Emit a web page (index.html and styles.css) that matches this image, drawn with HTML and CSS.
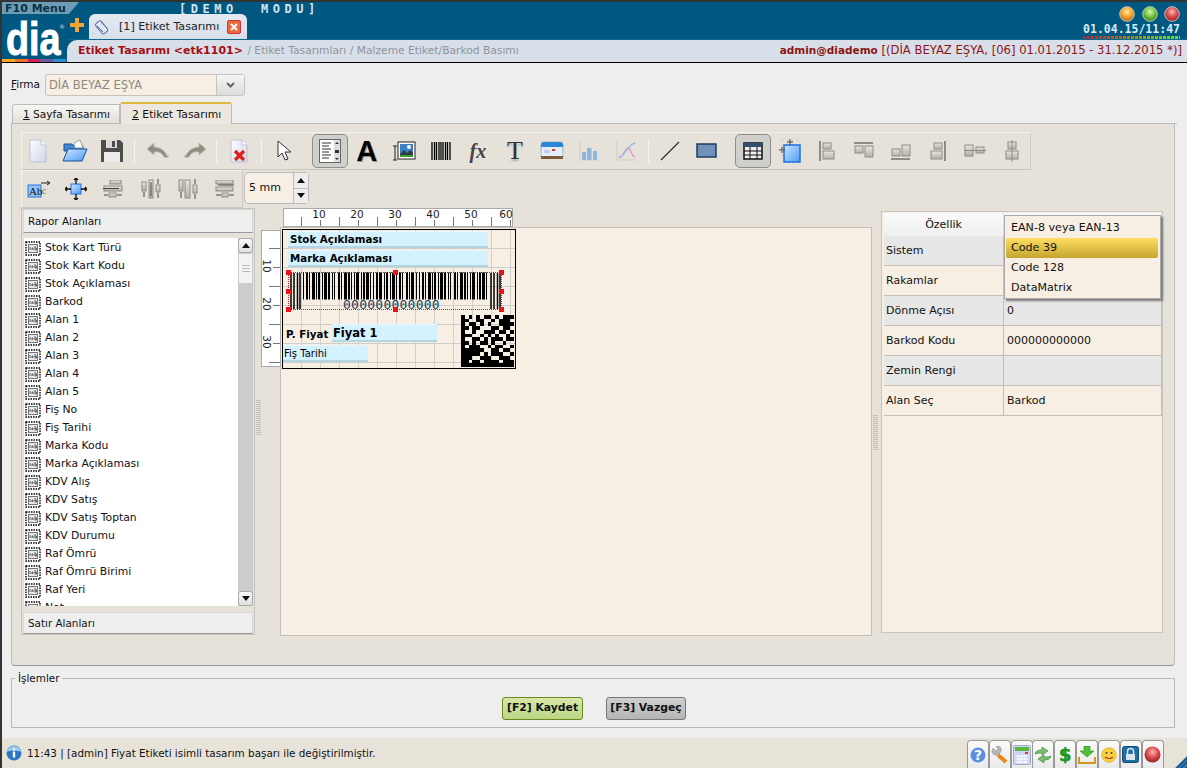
FILE: index.html
```html
<!DOCTYPE html>
<html lang="tr">
<head>
<meta charset="utf-8">
<title>Etiket Tasarımı</title>
<link rel="stylesheet" href="styles.css">
</head>
<body>
<svg class="defs" width="0" height="0">
  <defs>
    <symbol id="fld" viewBox="0 0 16 15">
      <rect x="1" y="1" width="14" height="13" fill="none" stroke="#000" stroke-width="1.400" stroke-dasharray="1.500 1"/>
      <rect x="3.500" y="3.500" width="9" height="8" fill="#e8e8e8" stroke="#777"/>
      <path d="M5 9V6M7 9V7h1v2M10 5v4h1.500V7H10" fill="none" stroke="#444" stroke-width=".8"/>
    </symbol>
    <linearGradient id="pg" x1="0" y1="0" x2="1" y2="1"><stop offset="0" stop-color="#fff"/><stop offset="1" stop-color="#cdd5ea"/></linearGradient>
    <linearGradient id="bl" x1="0" y1="0" x2="1" y2="1"><stop offset="0" stop-color="#cfe6ff"/><stop offset="1" stop-color="#4e9bf5"/></linearGradient>
    <linearGradient id="gy" x1="0" y1="0" x2="0" y2="1"><stop offset="0" stop-color="#e8e6df"/><stop offset="1" stop-color="#b3b0a6"/></linearGradient>
    <radialGradient id="ora" cx=".5" cy=".35" r=".7"><stop offset="0" stop-color="#ffe9a0"/><stop offset=".5" stop-color="#f2a52d"/><stop offset="1" stop-color="#a85c10"/></radialGradient>
    <radialGradient id="grn" cx=".5" cy=".35" r=".7"><stop offset="0" stop-color="#dcf8b8"/><stop offset=".5" stop-color="#72c340"/><stop offset="1" stop-color="#2e7a1c"/></radialGradient>
    <radialGradient id="red" cx=".5" cy=".35" r=".7"><stop offset="0" stop-color="#f8b8b8"/><stop offset=".5" stop-color="#dc4a4a"/><stop offset="1" stop-color="#8a1c1c"/></radialGradient>
  </defs>
</svg>
<div class="app">
  <header class="head">
    <div class="brand">
      <div class="f10">F10 Menu</div>
      <div class="logo"><span class="logo-txt">dia</span><span class="logo-r">®</span></div>
      <div class="strip"><i class="s1"></i><i class="s2"></i><i class="s3"></i><i class="s4"></i><i class="s5"></i></div>
    </div>
    <div class="head-main">
      <div class="head-top">
        <div class="demo">[DEMO  MODU]</div>
        <div class="tabline">
          <svg class="plus" width="14" height="14" viewBox="0 0 14 14"><path d="M5 0h4v5h5v4H9v5H5V9H0V5h5z" fill="#f2a531"/></svg>
          <div class="apptab">
            <svg width="16" height="16" viewBox="0 0 16 16"><g fill="#dfe6f4" stroke="#5a69a8"><rect x="4" y="1.500" width="7" height="13" rx="2" transform="rotate(-40 8 8)"/></g><path d="M3 7l6 6M7 3l6 6" stroke="#5a69a8" fill="none"/></svg>
            <span class="apptab-t">[1] Etiket Tasarımı</span>
            <span class="close"><svg width="8" height="8" viewBox="0 0 8 8"><path d="M1 1l6 6M7 1L1 7" stroke="#fff" stroke-width="2"/></svg></span>
          </div>
        </div>
        <div class="sysbox">
          <div class="lights">
            <svg width="16" height="16" viewBox="0 0 16 16"><circle cx="8" cy="8" r="7.300" fill="url(#ora)" stroke="#ddd" stroke-width=".8"/></svg>
            <svg width="16" height="16" viewBox="0 0 16 16"><circle cx="8" cy="8" r="7.300" fill="url(#grn)" stroke="#ddd" stroke-width=".8"/></svg>
            <svg width="16" height="16" viewBox="0 0 16 16"><circle cx="8" cy="8" r="7.300" fill="url(#red)" stroke="#ddd" stroke-width=".8"/></svg>
          </div>
          <div class="clock">01.04.15/11:47</div>
          <div class="meter"></div>
        </div>
      </div>
      <div class="crumb">
        <span class="crumb-l"><b class="crumb-b">Etiket Tasarımı &lt;etk1101&gt;</b> <span class="crumb-g">/ Etiket Tasarımları / Malzeme Etiket/Barkod Basımı</span></span>
        <span class="crumb-r"><b class="crumb-u">admin@diademo</b> [(DİA BEYAZ EŞYA, [06] 01.01.2015 - 31.12.2015 *)]</span>
      </div>
    </div>
  </header>

  <main class="main">
    <div class="firma">
      <span class="firma-l"><u>F</u>irma</span>
      <div class="combo">
        <span class="combo-v">DİA BEYAZ EŞYA</span>
        <span class="combo-b"><svg width="9" height="6" viewBox="0 0 9 6"><path d="M1 1l3.500 3.500L8 1" fill="none" stroke="#666" stroke-width="2"/></svg></span>
      </div>
    </div>
    <div class="tabs">
      <div class="tab"><u>1</u> Sayfa Tasarımı</div>
      <div class="tab tab-on"><u>2</u> Etiket Tasarımı</div>
    </div>
    <section class="panel">
      <div class="tb tb1">
        <span class="ib ib-first"><svg width="22" height="24" viewBox="0 0 22 24"><path d="M3 1h11l5 5v17H3z" fill="url(#pg)" stroke="#bcc2d2"/><path d="M14 1v5h5" fill="#fff" stroke="#bcc2d2"/></svg></span>
        <span class="ib"><svg width="26" height="24" viewBox="0 0 26 24"><path d="M2 5h8l2 2h9v5H2z" fill="#3f86d6" stroke="#1b4f9c"/><path d="M12 4l6-3 3 8h-8z" fill="#fff" stroke="#8aa"/><path d="M1 22l5-12h19l-5 12z" fill="url(#bl)" stroke="#1b4f9c"/></svg></span>
        <span class="ib"><svg width="24" height="24" viewBox="0 0 24 24"><path d="M1 1h19l3 3v19H1z" fill="#4d4d4d"/><rect x="6" y="1" width="11" height="8" fill="#d8d8d8"/><rect x="12" y="2" width="3" height="6" fill="#4d4d4d"/><rect x="4" y="13" width="16" height="10" fill="#ececec"/></svg></span>
        <i class="sep sep8"></i>
        <span class="ib"><svg width="24" height="18" viewBox="0 0 24 18"><path d="M8 1L1 7l7 6v-3c5-1 8 1 10 5 3 1 5 0 5-1-3 2-2-8-15-9z" fill="#8f8d82" stroke="#bdbbb0"/></svg></span>
        <span class="ib"><svg width="24" height="18" viewBox="0 0 24 18"><path d="M16 1l7 6-7 6v-3c-5-1-8 1-10 5-3 1-5 0-5-1 3 2 2-8 15-9z" fill="#8f8d82" stroke="#bdbbb0"/></svg></span>
        <i class="sep sep7"></i>
        <span class="ib"><svg width="22" height="24" viewBox="0 0 22 24"><path d="M3 1h11l5 5v17H3z" fill="url(#pg)" stroke="#bcc2d2"/><path d="M14 1v5h5" fill="#fff" stroke="#bcc2d2"/><path d="M7 12l9 9M16 12l-9 9" stroke="#e0201a" stroke-width="3.200"/></svg></span>
        <i class="sep sep8"></i>
        <span class="ib"><svg width="16" height="22" viewBox="0 0 16 22"><path d="M2 1v16l4-4 3 7 3-1-3-7h6z" fill="#fff" stroke="#333"/></svg></span>
        <span class="ib ib-on ib-m9"><svg width="22" height="24" viewBox="0 0 22 24"><rect x=".5" y=".5" width="21" height="23" fill="#fff" stroke="#666"/><path d="M3 4h9M3 7h7M3 10h9M3 13h7M3 16h9M3 19h7" stroke="#333"/><rect x="15" y="1" width="6" height="22" fill="#ddd"/><path d="M16 5l2-2 2 2zM16 19l2 2 2-2zM16 11h4v3h-4z" fill="#333"/></svg></span>
        <span class="ib ib-n"><span class="gA">A</span></span>
        <span class="ib ib-n"><svg width="24" height="22" viewBox="0 0 24 22"><path d="M3 6v14M1 6h4M1 20h4" stroke="#222"/><rect x="6" y="2" width="17" height="17" fill="#fff" stroke="#222"/><rect x="8" y="4" width="13" height="13" fill="#3b7fc4"/><path d="M8 14l4-4 3 3 3-3 3 3v4H8z" fill="#2c3e40"/><path d="M8 15h13v2H8z" fill="#3a9a30"/><circle cx="17" cy="7" r="2" fill="#fff"/></svg></span>
        <span class="ib ib-n"><svg width="20" height="18" viewBox="0 0 20 18"><path d="M1 0v18M3.500 0v18M5.500 0v18M8 0v18M10 0v18M12 0v18M14.500 0v18M16.500 0v18M19 0v18" stroke="#000" stroke-width="1.300"/></svg></span>
        <span class="ib ib-n"><span class="gfx">fx</span></span>
        <span class="ib ib-n"><span class="gT">T</span></span>
        <span class="ib ib-n"><svg width="24" height="22" viewBox="0 0 24 22"><path d="M1 5q0-3 3-3h16q3 0 3 3v12H1z" fill="#e3eefa" stroke="#9bb"/><path d="M1 5q0-3 3-3h16q3 0 3 3v2H1z" fill="#2b86d4"/><rect x="1" y="16" width="22" height="3" fill="#7c5a3c"/><rect x="12" y="9" width="3" height="2" fill="#d33"/><rect x="4" y="10" width="6" height="3" fill="#bcd0ea"/></svg></span>
        <span class="ib ib-n"><svg width="22" height="22" viewBox="0 0 22 22"><path d="M2 1v19h19" fill="none" stroke="#cfcdc6"/><rect x="4" y="12" width="4" height="8" fill="#8eb6de"/><rect x="9" y="8" width="4.500" height="12" fill="#8eb6de"/><rect x="15" y="11" width="4" height="9" fill="#8eb6de"/></svg></span>
        <span class="ib ib-n"><svg width="22" height="22" viewBox="0 0 22 22"><path d="M2 1v19h19" fill="none" stroke="#cfcdc6"/><path d="M4 18c5-2 6-10 9-10 3 0 3 8 7 9" fill="none" stroke="#d9a0c6" stroke-width="1.400"/><path d="M4 17c7 0 7-12 16-14" fill="none" stroke="#94bde6" stroke-width="1.400"/></svg></span>
        <i class="sep sep7"></i>
        <span class="ib ib-n"><svg width="20" height="20" viewBox="0 0 20 20"><path d="M1 19L19 1" stroke="#333" stroke-width="1.200"/></svg></span>
        <span class="ib ib-n"><svg width="22" height="16" viewBox="0 0 22 16"><rect x="1" y="1" width="19" height="13" fill="#7092b8" stroke="#1e3c60" stroke-width="1.500"/></svg></span>
        <span class="ib ib-on ib-m9"><svg width="20" height="18" viewBox="0 0 20 18"><rect x="1" y="1" width="18" height="16" fill="#eee" stroke="#111" stroke-width="1.500"/><rect x="1" y="1" width="18" height="4" fill="#33506e"/><path d="M1 9h18M1 13h18M7 5v12M14 5v12" stroke="#111"/></svg></span>
        <span class="ib ib-n"><svg width="22" height="24" viewBox="0 0 22 24"><rect x="5" y="6" width="16" height="17" fill="url(#bl)" stroke="#1f6fe0" stroke-width="1.500"/><path d="M11 0v6M8 3h6M0 11h6M3 8v6" stroke="#444"/><path d="M3 1h16M3 1v20" stroke="#bbb" stroke-dasharray="1 4"/></svg></span>
        <span class="ib ib-n"><svg width="16" height="20" viewBox="0 0 16 20"><rect x="0" y="0" width="2" height="20" fill="#8f8c84"/><rect x="4" y="2" width="8" height="6" fill="url(#gy)" stroke="#8f8c84"/><rect x="4" y="10" width="11" height="8" fill="url(#gy)" stroke="#8f8c84"/></svg></span>
        <span class="ib ib-n"><svg width="20" height="18" viewBox="0 0 20 18"><rect x="0" y="0" width="19" height="2" fill="#8f8c84"/><rect x="1" y="4" width="8" height="7" fill="url(#gy)" stroke="#8f8c84"/><rect x="11" y="4" width="8" height="11" fill="url(#gy)" stroke="#8f8c84"/></svg></span>
        <span class="ib ib-n"><svg width="20" height="18" viewBox="0 0 20 18"><rect x="0" y="16" width="19" height="2" fill="#8f8c84"/><rect x="1" y="7" width="8" height="7" fill="url(#gy)" stroke="#8f8c84"/><rect x="11" y="3" width="8" height="11" fill="url(#gy)" stroke="#8f8c84"/></svg></span>
        <span class="ib ib-n"><svg width="16" height="20" viewBox="0 0 16 20"><rect x="14" y="0" width="2" height="20" fill="#8f8c84"/><rect x="4" y="2" width="8" height="6" fill="url(#gy)" stroke="#8f8c84"/><rect x="1" y="10" width="11" height="8" fill="url(#gy)" stroke="#8f8c84"/></svg></span>
        <span class="ib ib-n"><svg width="22" height="14" viewBox="0 0 22 14"><rect x="1" y="1" width="8" height="11" fill="url(#gy)" stroke="#8f8c84"/><rect x="12" y="3" width="8" height="6" fill="url(#gy)" stroke="#8f8c84"/><path d="M0 6.500h22" stroke="#8f8c84"/></svg></span>
        <span class="ib ib-n"><svg width="14" height="22" viewBox="0 0 14 22"><rect x="3" y="2" width="8" height="7" fill="url(#gy)" stroke="#8f8c84"/><rect x="1" y="11" width="12" height="8" fill="url(#gy)" stroke="#8f8c84"/><path d="M7 0v22" stroke="#8f8c84"/></svg></span>
      </div>
      <div class="tb2wrap">
        <div class="tb tb2">
          <span class="ib ib-first2"><svg width="24" height="20" viewBox="0 0 24 20"><rect x="1" y="6" width="13" height="12" fill="#8fc2f6" stroke="#2a75d8"/><text x="2" y="16" class="ic-t">Ab</text><text x="15" y="15" class="ic-g">c</text><path d="M14 4h8M20 2l3 2-3 2" fill="none" stroke="#222"/></svg></span>
          <span class="ib"><svg width="22" height="22" viewBox="0 0 22 22"><rect x="6" y="6" width="10" height="10" fill="url(#bl)" stroke="#1f6fe0"/><path d="M11 0v6M9 2l2-2 2 2M11 22v-6M9 20l2 2 2-2M0 11h6M2 9l-2 2 2 2M22 11h-6M20 9l2 2-2 2" fill="none" stroke="#111" stroke-width="1.300"/></svg></span>
          <span class="ib"><svg width="20" height="18" viewBox="0 0 20 18"><rect x="7" y="0" width="11" height="4" fill="url(#gy)" stroke="#8f8c84"/><rect x="1" y="6" width="18" height="5" fill="url(#gy)" stroke="#8f8c84"/><rect x="6" y="13" width="7" height="4" fill="url(#gy)" stroke="#8f8c84"/><path d="M0 8.500h16M1 15h4M14 15h5" stroke="#444"/></svg></span>
          <span class="ib"><svg width="20" height="20" viewBox="0 0 20 20"><rect x="1" y="3" width="4" height="9" fill="url(#gy)" stroke="#8f8c84"/><rect x="8" y="1" width="4" height="18" fill="url(#gy)" stroke="#8f8c84"/><rect x="15" y="6" width="4" height="7" fill="url(#gy)" stroke="#8f8c84"/><path d="M3 13v5M10 3v14M17 0v5M17 14v5" stroke="#444"/></svg></span>
          <span class="ib"><svg width="20" height="20" viewBox="0 0 20 20"><rect x="1" y="1" width="4" height="11" fill="url(#gy)" stroke="#8f8c84"/><rect x="7" y="1" width="5" height="18" fill="url(#gy)" stroke="#8f8c84"/><rect x="15" y="6" width="4" height="8" fill="url(#gy)" stroke="#8f8c84"/><path d="M3 13v6M17 0v5M17 15v5" stroke="#444"/></svg></span>
          <span class="ib"><svg width="20" height="18" viewBox="0 0 20 18"><rect x="1" y="0" width="17" height="4" fill="url(#gy)" stroke="#8f8c84"/><rect x="1" y="7" width="17" height="4" fill="url(#gy)" stroke="#8f8c84"/><rect x="7" y="13" width="6" height="4" fill="url(#gy)" stroke="#8f8c84"/><path d="M3 5h16M1 15h5M14 15h5" stroke="#444"/></svg></span>
        </div>
        <div class="spin">
          <span class="spin-v">5 mm</span>
          <span class="spin-b">
            <span class="spin-u"><svg width="8" height="5" viewBox="0 0 8 5"><path d="M0 5l4-5 4 5z" fill="#111"/></svg></span>
            <span class="spin-d"><svg width="8" height="5" viewBox="0 0 8 5"><path d="M0 0l4 5 4-5z" fill="#111"/></svg></span>
          </span>
        </div>
      </div>
      <div class="work">
        <aside class="left">
          <div class="lhead">Rapor Alanları</div>
          <div class="listbox">
            <ul class="list">
              <li><svg class="fi"><use href="#fld"/></svg>Stok Kart Türü</li>
              <li><svg class="fi"><use href="#fld"/></svg>Stok Kart Kodu</li>
              <li><svg class="fi"><use href="#fld"/></svg>Stok Açıklaması</li>
              <li><svg class="fi"><use href="#fld"/></svg>Barkod</li>
              <li><svg class="fi"><use href="#fld"/></svg>Alan 1</li>
              <li><svg class="fi"><use href="#fld"/></svg>Alan 2</li>
              <li><svg class="fi"><use href="#fld"/></svg>Alan 3</li>
              <li><svg class="fi"><use href="#fld"/></svg>Alan 4</li>
              <li><svg class="fi"><use href="#fld"/></svg>Alan 5</li>
              <li><svg class="fi"><use href="#fld"/></svg>Fiş No</li>
              <li><svg class="fi"><use href="#fld"/></svg>Fiş Tarihi</li>
              <li><svg class="fi"><use href="#fld"/></svg>Marka Kodu</li>
              <li><svg class="fi"><use href="#fld"/></svg>Marka Açıklaması</li>
              <li><svg class="fi"><use href="#fld"/></svg>KDV Alış</li>
              <li><svg class="fi"><use href="#fld"/></svg>KDV Satış</li>
              <li><svg class="fi"><use href="#fld"/></svg>KDV Satış Toptan</li>
              <li><svg class="fi"><use href="#fld"/></svg>KDV Durumu</li>
              <li><svg class="fi"><use href="#fld"/></svg>Raf Ömrü</li>
              <li><svg class="fi"><use href="#fld"/></svg>Raf Ömrü Birimi</li>
              <li><svg class="fi"><use href="#fld"/></svg>Raf Yeri</li>
              <li><svg class="fi"><use href="#fld"/></svg>Not</li>
            </ul>
            <div class="sb">
              <span class="sb-btn"><svg width="8" height="5" viewBox="0 0 8 5"><path d="M0 5l4-5 4 5z" fill="#111"/></svg></span>
              <span class="sb-thumb"><i></i></span>
              <span class="sb-track"></span>
              <span class="sb-btn"><svg width="8" height="5" viewBox="0 0 8 5"><path d="M0 0l4 5 4-5z" fill="#111"/></svg></span>
            </div>
          </div>
          <div class="lhead lfoot">Satır Alanları</div>
        </aside>
        <div class="grip"></div>
        <div class="center">
          <div class="sheet"></div>
          <svg class="ruler-top" width="230" height="19" viewBox="0 0 230 19">
            <rect x=".5" y=".5" width="229" height="18" fill="#fff" stroke="#aaa"/>
            <path d="M18.500 9v9M37.500 12v6M56.500 9v9M75.500 12v6M94.500 9v9M113.500 12v6M132.500 9v9M151.500 12v6M170.500 9v9M189.500 12v6M208.500 9v9M227.500 12v6" stroke="#777"/>
            <g class="rt"><text x="36" y="10">10</text><text x="74" y="10">20</text><text x="112" y="10">30</text><text x="150" y="10">40</text><text x="188" y="10">50</text><text x="223" y="10">60</text></g>
          </svg>
          <svg class="ruler-left" width="20" height="137" viewBox="0 0 20 137">
            <rect x=".5" y=".5" width="19" height="136" fill="#fff" stroke="#aaa"/>
            <path d="M8 18.500h11M12 37.500h7M8 56.500h11M12 75.500h7M8 94.500h11M12 113.500h7M8 132.500h11" stroke="#777"/>
            <g class="rt"><text transform="translate(2 36) rotate(90)">10</text><text transform="translate(2 74) rotate(90)">20</text><text transform="translate(2 112) rotate(90)">30</text></g>
          </svg>
          <div class="label">
            <div class="fieldb f-stok">Stok Açıklaması</div>
            <div class="fieldb f-marka">Marka Açıklaması</div>
            <div class="bc">
              <svg class="bars" width="214" height="38" viewBox="0 0 214 38">
                <line x1="15" y1="14" x2="200" y2="14" stroke="#000" stroke-width="27" stroke-dasharray="1 2 2 1 1 2 3 1 1 1 2 2 1 1 3 1 2 2 1 1 1 3 2 1 1 2 3 1 2 1 1 2 1 1 3 2 1 1 2 1 3 1 1 2 1 2 2 1 3 2 1 1 2 2 1 1 3 1 1 2 2 1 1 3 2 1 1 1 3 2 1 2"/>
                <path d="M3 1v36M6 1v36M9.500 1v36M12 1v36M203 1v36M206 1v36M209.500 1v36M212 1v36" stroke="#000" stroke-width="1.500"/>
              </svg>
              <span class="bc-t">000000000000</span>
              <i class="h h1"></i><i class="h h2"></i><i class="h h3"></i><i class="h h4"></i><i class="h h5"></i><i class="h h6"></i><i class="h h7"></i><i class="h h8"></i>
            </div>
            <div class="pf">P. Fiyat</div>
            <div class="fieldb f-fiyat">Fiyat 1</div>
            <div class="fieldb f-fis">Fiş Tarihi</div>
            <svg class="dm" width="53" height="52" viewBox="0 0 14 14" preserveAspectRatio="none">
              <path stroke="#000" stroke-width="1" fill="none" shape-rendering="crispEdges" d="M0 .5h1M2 .5h1M4 .5h1M6 .5h2M9 .5h1M11 .5h3M0 1.500h2M4 1.500h2M8 1.500h1M10 1.500h3M0 2.500h1M2 2.500h2M5 2.500h1M7 2.500h1M10 2.500h4M0 3.500h2M3 3.500h2M8 3.500h2M11 3.500h2M0 4.500h1M3 4.500h1M6 4.500h3M10 4.500h2M13 4.500h1M0 5.500h3M5 5.500h1M7 5.500h1M9 5.500h1M12 5.500h1M0 6.500h1M3 6.500h2M6 6.500h1M8 6.500h3M12 6.500h2M0 7.500h2M3 7.500h1M5 7.500h2M8 7.500h1M11 7.500h1M0 8.500h1M2 8.500h3M7 8.500h1M9 8.500h2M13 8.500h1M0 9.500h6M8 9.500h2M11 9.500h2M0 10.500h5M6 10.500h1M8 10.500h3M13 10.500h1M0 11.500h3M5 11.500h3M10 11.500h3M0 12.500h2M3 12.500h2M6 12.500h4M11 12.500h3M0 13.500h14"/>
            </svg>
          </div>
        </div>
        <div class="grip grip-r"></div>
        <aside class="props">
          <div class="pgrid">
            <div class="ph">Özellik</div><div class="ph"></div>
            <div class="pc pg">Sistem</div><div class="pc pg"></div>
            <div class="pc">Rakamlar</div><div class="pc"></div>
            <div class="pc pg">Dönme Açısı</div><div class="pc pg">0</div>
            <div class="pc">Barkod Kodu</div><div class="pc">000000000000</div>
            <div class="pc pg">Zemin Rengi</div><div class="pc pg"></div>
            <div class="pc">Alan Seç</div><div class="pc">Barkod</div>
          </div>
          <div class="menu">
            <div class="mi">EAN-8 veya EAN-13</div>
            <div class="mi mi-on">Code 39</div>
            <div class="mi">Code 128</div>
            <div class="mi">DataMatrix</div>
          </div>
        </aside>
      </div>
    </section>
    <fieldset class="ops">
      <legend>İşlemler</legend>
      <div class="ops-row">
        <button class="btn btn-g" type="button">[F2] Kaydet</button>
        <button class="btn btn-y" type="button">[F3] Vazgeç</button>
      </div>
    </fieldset>
  </main>

  <footer class="status">
    <svg class="info" width="16" height="16" viewBox="0 0 16 16"><circle cx="8" cy="8" r="7.500" fill="#2a76c4"/><path d="M1 7a7 6 0 0 1 14 0c-4-2-10-2-14 0z" fill="#9cc8f0"/><rect x="6.800" y="6.500" width="2.400" height="6" fill="#fff"/><rect x="6.800" y="3.500" width="2.400" height="2" fill="#fff"/></svg>
    <span class="status-t">11:43 | [admin] Fiyat Etiketi isimli tasarım başarı ile değiştirilmiştir.</span>
    <div class="tray">
      <span class="tr"><svg width="16" height="16" viewBox="0 0 16 16"><circle cx="8" cy="8" r="7.500" fill="#5d8fe0"/><text x="8" y="12.500" class="q">?</text></svg></span>
      <span class="tr"><svg width="18" height="18" viewBox="0 0 18 18"><path d="M7 9l8 7" stroke="#e88a1a" stroke-width="4"/><path d="M2 2l3 3 2-2-2-3c4-1 7 3 4 7S1 9 1 5z" fill="#b5b5b5" stroke="#888" stroke-width=".5"/></svg></span>
      <span class="tr"><svg width="18" height="20" viewBox="0 0 18 20"><rect x=".5" y=".5" width="17" height="19" rx="1" fill="#cfd6f4" stroke="#a4a8c0"/><rect x="2" y="2" width="14" height="4" fill="#5cb53c"/><rect x="12" y="7" width="3" height="2" fill="#d33"/><path d="M3 11h12M3 14h12M3 17h12M6 10v8M9 10v8M12 10v8" stroke="#fff"/></svg></span>
      <span class="tr"><svg width="18" height="16" viewBox="0 0 18 16"><path d="M1 7c1-3 3-4 7-4V0l6 4-6 4V6C5 6 3 6 1 7zM17 9c-1 3-3 4-7 4v3l-6-4 6-4v2c3 0 5 0 7-1z" fill="#7cbf6c" stroke="#3c8a3c" stroke-width=".7"/></svg></span>
      <span class="tr"><span class="dollar">$</span></span>
      <span class="tr"><svg width="18" height="18" viewBox="0 0 18 18"><path d="M6 0h6v5h4l-7 6-7-6h4z" fill="#4cc030" stroke="#2a8a1a" stroke-width=".6"/><path d="M1 11v6h16v-6" fill="none" stroke="#d09a20" stroke-width="2"/></svg></span>
      <span class="tr"><svg width="16" height="16" viewBox="0 0 16 16"><circle cx="8" cy="8" r="7.300" fill="#fbd23c" stroke="#d0a020" stroke-width=".6"/><circle cx="5.500" cy="6" r="1" fill="#444"/><circle cx="10.500" cy="6" r="1" fill="#444"/><path d="M4 10q4 3 8 0" fill="none" stroke="#a33" stroke-width="1.100"/></svg></span>
      <span class="tr"><svg width="17" height="17" viewBox="0 0 17 17"><rect x=".5" y=".5" width="16" height="16" rx="2" fill="#1c6ea4" stroke="#124a70"/><rect x="4" y="8" width="9" height="6" fill="#d8e4ee"/><path d="M5.500 8V5.500a3 3 0 0 1 6 0V8" fill="none" stroke="#d8e4ee" stroke-width="1.500"/></svg></span>
      <span class="tr"><svg width="17" height="17" viewBox="0 0 17 17"><circle cx="8.500" cy="8.500" r="8" fill="url(#red)"/></svg></span>
    </div>
    <i class="corner"></i>
  </footer>
</div>
</body>
</html>
```

FILE: styles.css
```css
* { box-sizing: border-box; }
html, body { margin: 0; padding: 0; }
body { width: 1187px; height: 768px; overflow: hidden; background: #eee; font: 10.800px/1 "DejaVu Sans", sans-serif; color: #111; }
.defs { position: absolute; }
.app { width: 1187px; height: 768px; display: flex; flex-direction: column; border-top: 2px solid #333; border-left: 2px solid #333; }
svg { display: block; flex: none; }

.head { height: 61px; display: flex; background: #005880; flex: none; border-bottom: 1px solid #000; }
.brand { width: 65px; flex: none; display: flex; flex-direction: column; }
.f10 { width: 77px; height: 12px; background: #6c9db4; color: #0c3148; font: bold 11px/13px "DejaVu Sans", sans-serif; padding-left: 3px; clip-path: polygon(0 0, 100% 0, 87% 100%, 0 100%); flex: none; position: relative; z-index: 2; }
.logo { height: 45px; position: relative; overflow: hidden; }
.logo-txt { display: block; color: #fff; font: bold 46px/45px "Liberation Sans", sans-serif; -webkit-text-stroke: 1px #fff; transform: scaleX(.82); transform-origin: 0 50%; margin: 3px 0 0 4px; }
.logo-r { position: absolute; left: 57px; top: 10px; color: #cfdde6; font: 6px/1 "DejaVu Sans", sans-serif; }
.strip { height: 3px; display: flex; flex: none; width: 64px; }
.strip i { flex: 1; }
.s1 { background: #f5a623; } .s2 { background: #ef6f2e; } .s3 { background: #d81e5b; } .s4 { background: #6a5aa0; } .s5 { background: #2a8fd0; }

.head-main { flex: 1; display: flex; flex-direction: column; min-width: 0; }
.head-top { height: 38px; position: relative; flex: none; border-bottom: 1px solid #0a6a8e; display: flex; align-items: flex-end; }
.demo { position: absolute; left: 112px; top: 0; font: bold 12px/14px "DejaVu Sans Mono", monospace; letter-spacing: 4.500px; white-space: pre; color: #d2e4ee; }
.tabline { display: flex; align-items: flex-start; margin-left: 3px; height: 25px; }
.plus { margin: 4px 5px 0 0; }
.apptab { width: 158px; height: 25px; background: linear-gradient(#e4e9f1, #d8dfe9); border-radius: 6px 6px 0 0; display: flex; align-items: center; padding-left: 5px; }
.apptab-t { margin-left: 9px; width: 108px; white-space: nowrap; font-size: 11.100px; color: #222; }
.close { width: 14px; height: 14px; background: #ea6a3a; border: 1px solid #c34; border-radius: 2px; display: flex; align-items: center; justify-content: center; }
.sysbox { position: absolute; right: 7px; top: 4px; width: 97px; display: flex; flex-direction: column; align-items: flex-end; }
.lights { display: flex; gap: 6.500px; padding-right: 0; }
.clock { font: bold 11.500px/13px "DejaVu Sans Mono", monospace; color: #d9ecf8; white-space: nowrap; margin-top: 1px; }
.meter { width: 97px; height: 3px; background: repeating-linear-gradient(90deg, transparent 0 3px, #005880 3px 4px), linear-gradient(90deg, #e81010, #b07c10 45%, #8fb818 75%, #60e828); }

.crumb { flex: 1; background: #d8dfe9; border-radius: 10px 0 0 0; display: flex; justify-content: space-between; align-items: center; padding: 0 5px 0 11px; white-space: nowrap; }
.crumb-b { color: #a60f12; font-weight: bold; font-size: 11px; }
.crumb-g { color: #8f949c; font-size: 10.700px; margin-left: 1px; }
.crumb-r { color: #8e1414; font-size: 11.600px; }
.crumb-u { font-size: 10.500px; }

.main { flex: 1; display: flex; flex-direction: column; padding: 10px 10px 10px 9px; min-height: 0; }
.firma { height: 23px; display: flex; align-items: center; gap: 8px; flex: none; }
.firma-l { font-size: 10.500px; width: 26px; }
.combo { width: 200px; height: 22px; border: 1px solid #c6c3b8; border-radius: 3px; display: flex; background: #f7efe3; }
.combo-v { flex: 1; color: #8b8a80; padding-left: 3px; line-height: 20px; font-size: 11.500px; }
.combo-b { width: 28px; border-left: 1px solid #c6c3b8; background: linear-gradient(#f5f5f5, #dcdcdc); display: flex; align-items: center; justify-content: center; }

.tabs { display: flex; align-items: flex-end; height: 28px; flex: none; border-bottom: 1px solid #bbb; padding-left: 1px; }
.tab { width: 108px; height: 19px; border: 1px solid #bbb; border-bottom: 0; border-radius: 3px 0 0 0; background: linear-gradient(#f6f6f4, #e2e0d8); padding-left: 10px; line-height: 19px; font-size: 10.600px; white-space: nowrap; }
.tab-on { width: 112px; height: 22px; border-top: 2px solid #e0b83c; background: #ece8df; line-height: 21px; padding-left: 11px; border-radius: 3px 3px 0 0; margin-bottom: -1px; font-size: 10.800px; }

.panel { height: 542px; flex: none; width: 1164px; background: #e6e2da; border: 1px solid #bbb; border-top: 0; border-radius: 0 0 4px 4px; padding: 8px 9px 0 9px; display: flex; flex-direction: column; border-bottom-color: #999; }
.tb { display: flex; align-items: center; border: 1px solid #f5f2ea; border-right-color: #cdcac2; border-bottom-color: #c9c6bc; }
.tb1 { width: 1010px; height: 38px; flex: none; }
.ib { width: 37.300px; height: 36px; display: flex; align-items: center; justify-content: center; flex: none; }
.ib-first { margin-left: -3px; }
.ib-first2 { margin-left: -2px; }
.ib-n { width: 37.100px; }
.ib-on { width: 36px; height: 34px; background: #cfcfcc; border: 1px solid #8e8e8a; border-radius: 5px; }
.ib-m9 { margin-left: 9px; }
.sep { width: 1px; height: 24px; background: #f7f5ee; flex: none; }
.sep8 { margin: 0 3.500px; }
.sep7 { margin: 0 3px; }
.gA { font: bold 29px/1 "Liberation Sans", sans-serif; color: #000; text-shadow: 1px 1px 1px #888; }
.gfx { font: italic bold 20px/1 "Liberation Serif", serif; color: #444; }
.gT { font: 26px/1 "Liberation Serif", serif; color: #333; text-shadow: 0 2px 2px #aaa; }
.ic-t { font: 11px "Liberation Serif", serif; fill: #111; }
.ic-g { font: 10px "Liberation Serif", serif; fill: #777; }

.tb2wrap { display: flex; height: 38px; flex: none; align-items: flex-start; }
.tb2 { width: 222px; height: 38px; }
.spin { width: 65px; height: 32px; margin: 2px 0 0 1px; border: 1px solid #bbb; border-radius: 4px; background: #f7efe3; display: flex; }
.spin-v { flex: 1; padding-left: 4px; line-height: 30px; font-size: 11px; }
.spin-b { width: 15px; border-left: 1px solid #bbb; display: flex; flex-direction: column; background: #eee; }
.spin-u, .spin-d { flex: 1; display: flex; align-items: center; justify-content: center; }
.spin-d { border-top: 1px solid #bbb; }

.work { display: flex; height: 428px; flex: none; align-items: flex-start; }
.left { width: 234px; height: 427px; flex: none; border: 1px solid #c6c5bf; display: flex; flex-direction: column; padding: 0 1px; }
.lhead { height: 24px; flex: none; background: #eee; border: 1px solid #d8d6d0; border-bottom: 1px solid #999; padding-left: 4px; line-height: 22px; font-size: 10.400px; }
.lfoot { height: 22px; line-height: 21px; margin-top: 6px; }
.listbox { height: 368px; flex: none; margin-top: 5px; margin-left: 1px; display: flex; background: #fff; overflow: hidden; }
.list { list-style: none; margin: 0; padding: 1px 0 0; flex: 1; overflow: hidden; }
.list li { height: 18px; display: flex; align-items: center; white-space: nowrap; }
.fi { width: 16px; height: 15px; margin: 0 4px 0 1px; }
.sb { width: 15px; flex: none; display: flex; flex-direction: column; background: #ccc; }
.sb-btn { height: 15px; background: linear-gradient(#fafafa, #e0e0e0); border: 1px solid #aaa; border-radius: 3px; display: flex; align-items: center; justify-content: center; flex: none; }
.sb-thumb { height: 31px; background: #f3f3f3; border: 1px solid #ccc; display: flex; align-items: center; justify-content: center; flex: none; }
.sb-thumb i { width: 8px; height: 7px; background: repeating-linear-gradient(#bbb 0 1px, transparent 1px 3px); }
.sb-track { flex: 1; }

.grip { width: 25px; height: 36px; flex: none; margin-top: 192px; background-image: repeating-linear-gradient(#c0bfb8 0 1px, transparent 1px 2px); background-size: 5px 100%; background-position: 1px 0; background-repeat: no-repeat; }
.grip-r { width: 9px; margin-top: 207px; }

.center { width: 592px; height: 428px; flex: none; position: relative; }
.sheet { position: absolute; left: 0; right: 0; top: 19px; bottom: 0; background: #f7efe3; border: 1px solid #c2c0b8; }
.ruler-top { position: absolute; left: 3px; top: 0; }
.ruler-left { position: absolute; left: -19px; top: 22px; }
.rt text { font: 10.500px "DejaVu Sans", sans-serif; fill: #222; text-anchor: middle; }
.label { position: absolute; left: 2px; top: 21px; width: 234px; height: 140px; border: 1px solid #000; background-color: #f7efe3; background-image: linear-gradient(90deg, #cfcfcb 1px, transparent 1px), linear-gradient(#cfcfcb 1px, transparent 1px); background-size: 19px 19px; background-position: 18px 18px; }
.fieldb { position: absolute; background: #d3f1ff; color: #000; white-space: nowrap; border-top: 1px solid #e8f6ff; border-bottom: 2px solid #b4d5e2; }
.f-stok { left: 5px; top: 1px; width: 200px; height: 17px; font: bold 10.300px/15px "DejaVu Sans", sans-serif; padding-left: 2px; }
.f-marka { left: 5px; top: 20px; width: 200px; height: 17px; font: bold 10.300px/15px "DejaVu Sans", sans-serif; padding-left: 2px; }
.f-fiyat { left: 49px; top: 94px; width: 105px; height: 18px; font: bold 11.500px/16px "DejaVu Sans", sans-serif; padding-left: 1px; }
.f-fis { left: 0; top: 115px; width: 85px; height: 17px; font: 10px/15px "DejaVu Sans", sans-serif; padding-left: 1px; }
.pf { position: absolute; left: 3px; top: 95px; font: bold 10.300px/18px "DejaVu Sans", sans-serif; color: #000; }
.dm { position: absolute; left: 178px; top: 85px; }
.bc { position: absolute; left: 5px; top: 42px; width: 214px; height: 38px; border: 1px dotted #e0141a; }
.bars { position: absolute; left: -1px; top: -1px; }
.bc-t { position: absolute; left: 54px; top: 26px; font: 13px/12px "DejaVu Sans Mono", monospace; color: #123a66; letter-spacing: .25px; white-space: nowrap; }
.h { position: absolute; width: 5px; height: 5px; background: #e8141a; }
.h1 { left: -3px; top: -3px; } .h2 { left: 104px; top: -3px; } .h3 { right: -3px; top: -3px; }
.h4 { left: -3px; top: 16px; } .h5 { right: -3px; top: 16px; }
.h6 { left: -3px; bottom: -3px; } .h7 { left: 104px; bottom: -3px; } .h8 { right: -3px; bottom: -3px; }

.props { width: 282px; height: 422px; margin-top: 3px; flex: none; background: #f7efe3; border: 1px solid #c6c5bf; position: relative; padding: 1px 1px 0 2px; }
.pgrid { display: grid; grid-template-columns: 120px 158px; grid-auto-rows: 30px; grid-template-rows: 23px; }
.ph { height: 23px; background: linear-gradient(#fafafa, #efefef); text-align: center; line-height: 23px; font-size: 11px; border-right: 1px solid #ddd; }
.pc { border-right: 1px solid #c2bfb6; border-bottom: 1px solid #c2bfb6; padding-left: 2px; line-height: 29px; font-size: 11px; }
.pc:nth-child(even) { padding-left: 3px; }
.pg { background: #e7e7e7; }
.menu { position: absolute; left: 122px; top: 3px; width: 157px; height: 84px; background: #f7efe3; border: 1px solid #aaa; box-shadow: 2px 2px 2px #777; padding: 2px 2px 0 1px; z-index: 3; }
.mi { height: 20px; line-height: 20px; padding-left: 5px; font-size: 11.100px; }
.mi-on { background: linear-gradient(#fedd60, #c6a530); border-radius: 2px; }

.ops { height: 56px; flex: none; margin: 6px 0 0 0; width: 1164px; padding: 0; border: 1px solid #b8b8b8; min-width: 0; }
.ops legend { padding: 0 3px; margin-left: 3px; font-size: 10.400px; line-height: 12px; }
.ops-row { display: flex; justify-content: center; gap: 23px; margin-top: 13px; padding-left: 2px; }
.btn { height: 23px; border-radius: 3px; font: bold 10.800px/1 "DejaVu Sans", sans-serif; color: #111; padding: 0; width: 81px; white-space: nowrap; }
.btn-g { background: linear-gradient(#d8e8a8, #bdd686); border: 1px solid #6a8a20; }
.btn-y { background: linear-gradient(#cfcfcf, #b5b5b5); border: 1px solid #777; width: 80px; }

.status { height: 30px; flex: none; background: #e8e3d9; display: flex; align-items: center; padding-left: 4px; position: relative; }
.info { margin-right: 5px; }
.status-t { font-size: 10.400px; white-space: nowrap; }
.tray { position: absolute; left: 965px; top: 2px; height: 28px; display: flex; }
.tr { width: 22px; height: 28px; background: linear-gradient(#fafafa, #eaeaea); border: 1px solid #999; border-bottom: 0; border-radius: 4px 4px 0 0; display: flex; align-items: center; justify-content: center; margin-right: -.200px; }
.q { font: bold 14px "DejaVu Sans", sans-serif; fill: #fff; text-anchor: middle; }
.dollar { font: bold 18px/1 "DejaVu Sans", sans-serif; color: #1c9a1c; text-shadow: 0 0 1px #063; }
.corner { position: absolute; right: 0; bottom: 0; width: 12px; height: 12px; background: repeating-linear-gradient(135deg, #1b5d94 0 2px, #3d84b8 2px 3px); clip-path: polygon(100% 0, 100% 100%, 0 100%); }
```
